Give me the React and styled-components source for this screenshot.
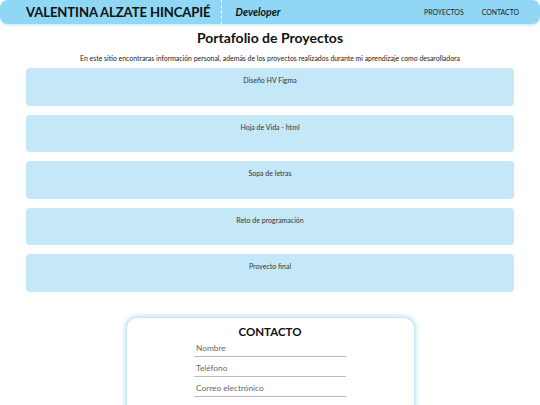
import React from "react";
import styled, { createGlobalStyle } from "styled-components";

const Global = createGlobalStyle`
  html, body { margin: 0; padding: 0; background: #ffffff; }
  body { font-family: "Lato", "Open Sans", sans-serif; color: #111; }
  * { box-sizing: border-box; }
`;

const Header = styled.header`
  display: flex;
  align-items: center;
  height: 24px;
  background: #8fd7f4;
  border-radius: 8px;
  box-shadow: 0 1px 3px rgba(143, 215, 244, 0.6);
  padding: 0 21px 0 26px;
`;

const Name = styled.h1`
  margin: 0;
  font-size: 13.1px;
  font-weight: 700;
  color: #111;
  letter-spacing: -0.1px;
  white-space: nowrap;
`;

const Divider = styled.span`
  align-self: stretch;
  width: 0;
  border-left: 1.5px dashed #ffffff;
  margin: 0 13px 0 11px;
`;

const Role = styled.span`
  font-size: 10.5px;
  font-weight: 700;
  font-style: italic;
  color: #111;
`;

const Nav = styled.nav`
  margin-left: auto;
  display: flex;
  gap: 18px;
`;

const NavLink = styled.a`
  font-size: 6.9px;
  color: #1a1a1a;
  text-decoration: none;
  text-transform: uppercase;
`;

const Main = styled.main`
  padding: 0 26px;
  display: flex;
  flex-direction: column;
  align-items: center;
`;

const Title = styled.h2`
  margin: 4px 0 0;
  font-size: 14px;
  font-weight: 700;
  line-height: 20px;
  color: #111;
`;

const Subtitle = styled.p`
  margin: 6px 0 5px;
  font-size: 6.9px;
  line-height: 9px;
  color: #222;
`;

const Cards = styled.div`
  width: 100%;
  display: flex;
  flex-direction: column;
  gap: 9px;
`;

const Card = styled.div`
  height: 37.5px;
  background: #c4e8f8;
  border-radius: 4px;
  padding-top: 7px;
  text-align: center;
  font-size: 7px;
  line-height: 10px;
  color: #333;
`;

const ContactCard = styled.section`
  margin-top: 26px;
  width: 287px;
  background: #fff;
  border-radius: 10px;
  box-shadow: 0 0 4px 2px rgba(170, 220, 240, 0.85);
  padding: 9px 0 20px;
  display: flex;
  flex-direction: column;
  align-items: center;
`;

const ContactTitle = styled.h3`
  margin: 0;
  font-size: 11.5px;
  font-weight: 700;
  line-height: 10px;
  color: #111;
`;

const Input = styled.input`
  width: 152px;
  height: 20px;
  border: none;
  border-bottom: 1px solid #bdbdbd;
  padding: 4px 2px 1px;
  font-family: inherit;
  font-size: 8.3px;
  font-weight: 400;
  outline: none;
  background: transparent;
  &::placeholder { color: #6a6a6a; }
`;

const projects = [
  "Diseño HV Figma",
  "Hoja de Vida - html",
  "Sopa de letras",
  "Reto de programación",
  "Proyecto final",
];

export default function App() {
  return (
    <>
      <Global />
      <Header>
        <Name>VALENTINA ALZATE HINCAPIÉ</Name>
        <Divider />
        <Role>Developer</Role>
        <Nav>
          <NavLink href="#proyectos">Proyectos</NavLink>
          <NavLink href="#contacto">Contacto</NavLink>
        </Nav>
      </Header>
      <Main>
        <Title>Portafolio de Proyectos</Title>
        <Subtitle>
          En este sitio encontraras información personal, además de los proyectos realizados durante mi aprendizaje como desarolladora
        </Subtitle>
        <Cards>
          {projects.map((p) => (
            <Card key={p}>{p}</Card>
          ))}
        </Cards>
        <ContactCard>
          <ContactTitle>CONTACTO</ContactTitle>
          <Input placeholder="Nombre" />
          <Input placeholder="Teléfono" />
          <Input placeholder="Correo electrónico" />
          <Input placeholder="Mensaje" />
        </ContactCard>
      </Main>
    </>
  );
}
